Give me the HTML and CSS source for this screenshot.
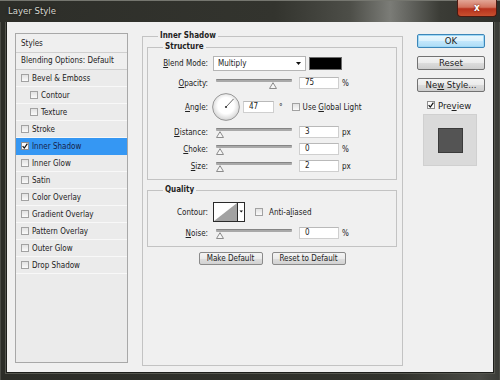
FILE: index.html
```html
<!DOCTYPE html>
<html lang="en">
<head>
<meta charset="utf-8">
<title>Layer Style</title>
<link rel="stylesheet" href="styles.css">
</head>
<body>
<div class="window">
  <div class="titlebar">
    <span class="title">Layer Style</span>
    <div class="close">x</div>
  </div>
  <div class="client">
    <div class="styles-panel">
      <div class="sp-head">Styles</div>
      <div class="sp-blend">Blending Options: Default</div>
      <div class="sp-row"><span class="cb"></span>Bevel &amp; Emboss</div>
      <div class="sp-row sub"><span class="cb"></span>Contour</div>
      <div class="sp-row sub"><span class="cb"></span>Texture</div>
      <div class="sp-row"><span class="cb"></span>Stroke</div>
      <div class="sp-row selected"><span class="cb on"><svg width="6" height="6" viewBox="0 0 6 6"><path d="M0.6 3.2 L2.3 5 L5.4 0.6" fill="none" stroke="#111" stroke-width="1.2"/></svg></span>Inner Shadow</div>
      <div class="sp-row"><span class="cb"></span>Inner Glow</div>
      <div class="sp-row"><span class="cb"></span>Satin</div>
      <div class="sp-row"><span class="cb"></span>Color Overlay</div>
      <div class="sp-row"><span class="cb"></span>Gradient Overlay</div>
      <div class="sp-row"><span class="cb"></span>Pattern Overlay</div>
      <div class="sp-row"><span class="cb"></span>Outer Glow</div>
      <div class="sp-row"><span class="cb"></span>Drop Shadow</div>
    </div>

    <fieldset class="group main">
      <legend>Inner Shadow</legend>
      <div class="main-body">
        <fieldset class="group">
          <legend>Structure</legend>
          <div class="sbody">
            <div class="frow blend">
              <span class="lbl"><u>B</u>lend Mode:</span>
              <div class="select"><span>Multiply</span><svg class="arrow" width="5" height="3" viewBox="0 0 5 3"><path d="M0 0 H5 L2.5 3 Z" fill="#111"/></svg></div>
              <div class="color"></div>
            </div>
            <div class="frow opacity">
              <span class="lbl"><u>O</u>pacity:</span>
              <div class="slider"><div class="track"></div><svg class="thumb" style="left:53px" width="8" height="7" viewBox="0 0 8 7"><path d="M0.5 6.5 L4 0.7 L7.5 6.5 Z" fill="#f6f6f6" stroke="#8c8c8c"/></svg></div>
              <div class="num">75</div>
              <span class="unit">%</span>
            </div>
            <div class="frow angle">
              <span class="lbl"><u>A</u>ngle:</span>
              <svg class="dial" width="28" height="28" viewBox="0 0 28 28">
                <defs><radialGradient id="dg" cx="50%" cy="45%" r="55%"><stop offset="0.55" stop-color="#ffffff"/><stop offset="1" stop-color="#d2d2d2"/></radialGradient></defs>
                <circle cx="14" cy="14" r="13.4" fill="url(#dg)" stroke="#8e8e8e" stroke-width="0.9"/>
                <line x1="14" y1="14" x2="21.6" y2="5.9" stroke="#555" stroke-width="0.9"/>
                <circle cx="14" cy="14" r="1.1" fill="#333"/>
              </svg>
              <div class="num short">47</div>
              <span class="deg">°</span>
              <span class="cb global"></span>
              <span class="cbl">Use <u>G</u>lobal Light</span>
            </div>
            <div class="frow">
              <span class="lbl"><u>D</u>istance:</span>
              <div class="slider"><div class="track"></div><svg class="thumb" style="left:0px" width="8" height="7" viewBox="0 0 8 7"><path d="M0.5 6.5 L4 0.7 L7.5 6.5 Z" fill="#f6f6f6" stroke="#8c8c8c"/></svg></div>
              <div class="num">3</div>
              <span class="unit">px</span>
            </div>
            <div class="frow">
              <span class="lbl"><u>C</u>hoke:</span>
              <div class="slider"><div class="track"></div><svg class="thumb" style="left:0px" width="8" height="7" viewBox="0 0 8 7"><path d="M0.5 6.5 L4 0.7 L7.5 6.5 Z" fill="#f6f6f6" stroke="#8c8c8c"/></svg></div>
              <div class="num">0</div>
              <span class="unit">%</span>
            </div>
            <div class="frow">
              <span class="lbl"><u>S</u>ize:</span>
              <div class="slider"><div class="track"></div><svg class="thumb" style="left:0px" width="8" height="7" viewBox="0 0 8 7"><path d="M0.5 6.5 L4 0.7 L7.5 6.5 Z" fill="#f6f6f6" stroke="#8c8c8c"/></svg></div>
              <div class="num">2</div>
              <span class="unit">px</span>
            </div>
          </div>
        </fieldset>

        <fieldset class="group quality">
          <legend>Quality</legend>
          <div class="qbody">
            <div class="frow contour-row">
              <span class="lbl">Contour:</span>
              <svg class="contour" width="32" height="20" viewBox="0 0 32 20">
                <rect x="0.5" y="0.5" width="31" height="19" fill="#fff" stroke="#2a2a2a"/>
                <path d="M1 19 L24 1 L24 19 Z" fill="#a2a2a2"/>
                <line x1="24.5" y1="0.5" x2="24.5" y2="19.5" stroke="#2a2a2a"/>
                <path d="M26.5 8.5 H30 L28.25 10.5 Z" fill="#111"/>
              </svg>
              <span class="cb anti"></span>
              <span class="cbl anti-l">Anti-a<u>l</u>iased</span>
            </div>
            <div class="frow">
              <span class="lbl"><u>N</u>oise:</span>
              <div class="slider"><div class="track"></div><svg class="thumb" style="left:0px" width="8" height="7" viewBox="0 0 8 7"><path d="M0.5 6.5 L4 0.7 L7.5 6.5 Z" fill="#f6f6f6" stroke="#8c8c8c"/></svg></div>
              <div class="num">0</div>
              <span class="unit">%</span>
            </div>
          </div>
        </fieldset>

        <div class="defaults">
          <div class="pbtn make">Make Default</div>
          <div class="pbtn reset">Reset to Default</div>
        </div>
      </div>
    </fieldset>

    <div class="actions">
      <div class="btn default"><span>OK</span></div>
      <div class="btn"><span>Reset</span></div>
      <div class="btn"><span>Ne<u>w</u> Style...</span></div>
      <div class="preview-row"><span class="cb on"><svg width="6" height="6" viewBox="0 0 6 6"><path d="M0.6 3.2 L2.3 5 L5.4 0.6" fill="none" stroke="#111" stroke-width="1.2"/></svg></span><span>Pre<u>v</u>iew</span></div>
      <div class="preview-box"><div class="preview-swatch"></div></div>
    </div>
  </div>
</div>
</body>
</html>
```
FILE: styles.css
```css
* { box-sizing: border-box; }
html, body { margin: 0; padding: 0; }
body {
  width: 500px;
  height: 380px;
  overflow: hidden;
  background: #2a2b26;
  font-family: "DejaVu Sans Condensed", "DejaVu Sans", sans-serif;
  font-stretch: condensed;
  font-size: 8px;
  color: #222;
}
u { text-decoration: underline; text-underline-offset: 1px; }

.window {
  position: relative;
  width: 500px;
  height: 380px;
  display: flex;
  flex-direction: column;
  background: linear-gradient(to right, #2c2d28 0%, #31322c 80%, #4a4b46 96%, #3a3b36 100%);
  box-shadow: inset 0 1px 0 #6a6b64, inset 1px 0 0 #4a4b45, inset -1px 0 0 #4a4b45;
}
.titlebar {
  position: relative;
  height: 22px;
  flex: none;
  display: flex;
  align-items: center;
  padding: 0 0 1px 8px;
  background: linear-gradient(to right, #2d2e29 0%, #33342e 55%, #4d4e48 70%, #7b7c77 78%, #62635e 82%, #3b3c36 88%, #2e2f2a 100%);
  box-shadow: inset 0 1px 0 #75766f;
}
.title {
  font-size: 9.5px;
  color: #d6d6cf;
  text-shadow: 0 0 3px rgba(0,0,0,0.6);
}
.close {
  position: absolute;
  top: 0;
  right: 3px;
  width: 40px;
  height: 17px;
  border: 1px solid #4a1a12;
  border-top: none;
  border-radius: 0 0 4px 4px;
  background: linear-gradient(#e2a696 0%, #d2735e 45%, #b7321d 55%, #c8502f 100%);
  color: #fff;
  font-family: "DejaVu Sans", sans-serif;
  font-weight: bold;
  font-size: 10px;
  line-height: 15px;
  text-align: center;
  text-shadow: 0 0 2px #5a1000;
}

.client {
  margin: 0 7px;
  height: 350px;
  flex: none;
  background: #f0f0f0;
  display: flex;
  align-items: flex-start;
  box-shadow: 0 0 0 1px #1d1e1b, 0 0 0 2px #55564f;
}

/* Styles list */
.styles-panel {
  flex: none;
  margin: 11px 0 0 8px;
  width: 113px;
  height: 330px;
  border: 1px solid #a8a8a8;
  background: #ebebeb;
}
.sp-head {
  height: 19px;
  line-height: 19px;
  padding-left: 5px;
  border-bottom: 1px solid #cfcfcf;
  background: #efefef;
}
.sp-blend {
  height: 17px;
  line-height: 16px;
  padding-left: 5px;
  border-bottom: 1px solid #cfcfcf;
  background: #efefef;
}
.sp-row {
  height: 17px;
  display: flex;
  align-items: center;
  gap: 3px;
  padding-left: 5px;
  border-bottom: 1px solid #f8f8f8;
}
.sp-row.sub { padding-left: 14px; }
.sp-row.selected {
  background: #3597f3;
  color: #15224a;
  border-bottom-color: #3597f3;
}
.cb {
  flex: none;
  width: 8px;
  height: 8px;
  border: 1px solid #a2a2a2;
  background: linear-gradient(#e2e2e2, #fafafa);
  display: flex;
  align-items: center;
  justify-content: center;
}
.cb.on { background: #fbfbfb; border-color: #8e8e8e; }

/* group boxes */
.group {
  margin: 0;
  padding: 0;
  min-width: 0;
  border: 1px solid #c3c3c3;
}
.group > legend {
  margin-left: 15px;
  padding: 0 2px;
  line-height: 10px;
  font-weight: bold;
  font-size: 8px;
  color: #1e1e1e;
}
.main {
  flex: none;
  margin: 9px 0 0 14px;
  width: 261px;
  height: 335px;
}
.main-body { padding: 1px 5px 0 4px; }
.sbody { padding: 4px 0 7px; }
.quality { margin-top: 5px; }
.qbody { padding: 7px 0 7px; }

.frow {
  display: flex;
  align-items: center;
  height: 12px;
  margin-top: 5px;
}
.frow.blend { height: 15px; margin-top: 0; }
.frow.opacity { margin-top: 6px; }
.frow.angle { height: 28px; margin-top: 4px; }
.frow.contour-row { height: 20px; margin-top: 0; }
.lbl {
  flex: none;
  width: 60px;
  text-align: right;
  color: #222;
}

.select {
  flex: none;
  margin-left: 5px;
  width: 93px;
  height: 15px;
  background: #fff;
  border: 1px solid #b5b5b5;
  display: flex;
  align-items: center;
  justify-content: space-between;
  padding: 0 4px 0 4px;
}
.color {
  flex: none;
  margin-left: 3px;
  width: 33px;
  height: 13px;
  background: #000;
  border: 1px solid #6d6d6d;
}

.slider {
  position: relative;
  flex: none;
  margin-left: 8px;
  width: 76px;
  height: 12px;
}
.track {
  position: absolute;
  left: 0;
  right: 0;
  top: 2px;
  height: 3px;
  background: #a9a9a9;
  border-top: 1px solid #858585;
  border-radius: 1px;
}
.thumb { position: absolute; top: 5px; }

.num {
  flex: none;
  margin-left: 7px;
  width: 40px;
  height: 12px;
  background: #fff;
  border: 1px solid #cfcfcf;
  border-top-color: #b9b9b9;
  padding-left: 5px;
  line-height: 10px;
}
.num.short { margin-left: 3px; width: 31px; }
.unit { margin-left: 3px; }
.dial { flex: none; margin-left: 4px; }
.deg { margin-left: 5px; }
.cb.global { margin-left: 9px; }
.cbl { margin-left: 3px; }
.contour { flex: none; margin-left: 5px; }
.cb.anti { margin-left: 10px; }
.anti-l { margin-left: 6px; }

.defaults {
  display: flex;
  justify-content: center;
  gap: 9px;
  margin-top: 5px;
}
.pbtn {
  height: 13px;
  border: 1px solid #8a8a8a;
  border-radius: 2px;
  background: linear-gradient(#f4f4f4 0%, #ebebeb 50%, #dedede 51%, #d2d2d2 100%);
  display: flex;
  align-items: center;
  justify-content: center;
}
.pbtn.make { width: 64px; }
.pbtn.reset { width: 74px; }

/* right column */
.actions {
  flex: none;
  margin: 12px 0 0 14px;
  width: 68px;
  display: flex;
  flex-direction: column;
  font-size: 9.5px;
}
.btn {
  height: 14px;
  margin-bottom: 8px;
  border: 1px solid #727272;
  border-radius: 2px;
  background: linear-gradient(#f3f3f3 0%, #ebebeb 50%, #dcdcdc 51%, #cdcdcd 100%);
  display: flex;
  align-items: center;
  justify-content: center;
  line-height: 1;
}
.btn.default {
  border-color: #3d86b8;
  background: linear-gradient(#ecf7fd 0%, #dbf1fc 50%, #c3e7fc 51%, #aedcf5 100%);
  box-shadow: inset 0 0 0 1px #9fd8f6;
}
.preview-row {
  height: 10px;
  margin-top: 0;
  padding-left: 10px;
  display: flex;
  align-items: center;
  gap: 3px;
}
.preview-box {
  margin: 4px 0 0 6px;
  width: 54px;
  height: 52px;
  background: #dadada;
  border: 1px solid #d0d0d0;
  display: flex;
  align-items: center;
  justify-content: center;
}
.preview-swatch {
  width: 25px;
  height: 25px;
  background: #545454;
  border: 1px solid #3a3a3a;
}
```
